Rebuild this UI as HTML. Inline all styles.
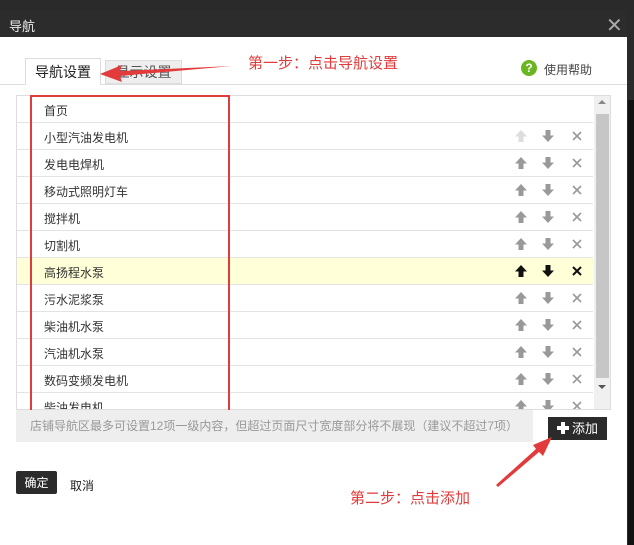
<!DOCTYPE html><html><head><meta charset="utf-8"><style>
body{margin:0;width:634px;height:545px;background:#2a2a2a;position:relative;overflow:hidden;font-family:"Liberation Sans","Noto Sans CJK SC",sans-serif;font-size:12px;color:#333}
.a{position:absolute}
.row{position:absolute;left:17px;width:576px;height:27px;border-bottom:1px solid #e3e3e3;box-sizing:border-box}
.row span{position:absolute;left:27px;top:6px;font-size:12px}
.ic{position:absolute;top:6px;width:14px;height:14px}
</style></head><body>
<div class="a" style="left:0;top:10px;width:627px;height:27px;background:#2c2c2c"></div>
<div class="a" style="left:628px;top:100px;width:6px;height:445px;background:#111"></div>
<div class="a" style="left:9px;top:16px;color:#eee;font-size:13px">导航</div>
<div class="a" style="left:606px;top:13px;color:#aaa;font-size:20px">✕</div>
<div class="a" style="left:0;top:37px;width:627px;height:508px;background:#fff"></div>
<div class="a" style="left:0;top:84px;width:627px;height:1px;background:#ddd"></div>
<div class="a" style="left:25px;top:58px;width:76px;height:27px;border:1px solid #ddd;border-bottom:none;background:#fff;box-sizing:border-box;font-size:14px;text-align:center;line-height:26px;color:#222">导航设置</div>
<div class="a" style="left:105px;top:60px;width:77px;height:24px;border:1px solid #ddd;background:#eee;box-sizing:border-box;font-size:14px;text-align:center;line-height:22px;color:#555">显示设置</div>
<div class="a" style="left:521px;top:60px;width:16px;height:16px;border-radius:50%;background:#6bb520;color:#fff;font-size:12px;font-weight:bold;text-align:center;line-height:16px">?</div>
<div class="a" style="left:544px;top:61px;color:#444">使用帮助</div>
<div class="a" style="left:16px;top:95px;width:595px;height:315px;border:1px solid #ddd;box-sizing:border-box;overflow:hidden">
<div id="rows"></div>
<div class="a" style="left:577px;top:0;width:17px;height:315px;background:#f0f0f0"></div>
<div class="a" style="left:579px;top:18px;width:13px;height:264px;background:#c6c6c6"></div>
<div class="a" style="left:581px;top:4px;width:0;height:0;border:4px solid transparent;border-bottom-color:#888;border-top:none"></div>
<div class="a" style="left:581px;top:289px;width:0;height:0;border:4px solid transparent;border-top-color:#555;border-bottom:none"></div>
</div>
<div class="a" style="left:30px;top:95px;width:200px;height:318px;border:2px solid #e23b3b;box-sizing:border-box"></div>
<div class="a" style="left:16px;top:410px;width:517px;height:32px;background:#eee;color:#999;line-height:32px;text-indent:14px">店铺导航区最多可设置12项一级内容，但超过页面尺寸宽度部分将不展现（建议不超过7项）</div>
<div class="a" style="left:548px;top:417px;width:59px;height:23px;background:#2b2b2b;color:#fff;font-size:13px;line-height:23px;text-indent:24px">添加</div>
<div class="a" style="left:557px;top:426px;width:12px;height:4px;background:#fff"></div>
<div class="a" style="left:561px;top:422px;width:4px;height:12px;background:#fff"></div>
<div class="a" style="left:16px;top:471px;width:41px;height:23px;background:#2b2b2b;border-radius:2px;color:#fff;font-size:12px;text-align:center;line-height:25px">确定</div>
<div class="a" style="left:70px;top:477px;color:#222">取消</div>
<div class="a" style="left:248px;top:52px;color:#e23b3b;font-size:15px">第一步：点击导航设置</div>
<div class="a" style="left:350px;top:487px;color:#e23b3b;font-size:15px">第二步：点击添加</div>
<svg class="a" style="left:0;top:0" width="634" height="545">
<polygon points="232,66 120,71 122,65 100,74 122,82 120,76" fill="#e23b3b"/>
<polygon points="498,487 539,452 543,456 552,437 533,445 536,449 496,485" fill="#e23b3b"/>
</svg>
<script>
var n=["首页","小型汽油发电机","发电电焊机","移动式照明灯车","搅拌机","切割机","高扬程水泵","污水泥浆泵","柴油机水泵","汽油机水泵","数码变频发电机","柴油发电机"];
var h="";
function up(c){return '<svg class="ic" style="left:497px" viewBox="0 0 14 14"><path d="M7 1L13 7.5H9.5V13H4.5V7.5H1Z" fill="'+c+'"/></svg>'}
function dn(c){return '<svg class="ic" style="left:524px" viewBox="0 0 14 14"><path d="M7 13L13 6.5H9.5V1H4.5V6.5H1Z" fill="'+c+'"/></svg>'}
function x(c,w){return '<svg class="ic" style="left:553px" viewBox="0 0 14 14"><path d="M3 3L11 11M11 3L3 11" stroke="'+c+'" stroke-width="'+w+'"/></svg>'}
for(var i=0;i<n.length;i++){var hl=i==6;var c=hl?"#111":"#999";
h+='<div class="row" style="left:0;top:'+(i*27)+'px;'+(hl?'background:#ffffd8;':'')+'"><span>'+n[i]+'</span>'+(i>0?up(i==1?"#ddd":c)+dn(c)+x(c,hl?2:1.6):'')+'</div>';}
document.getElementById("rows").innerHTML=h;
</script>
</body></html>
